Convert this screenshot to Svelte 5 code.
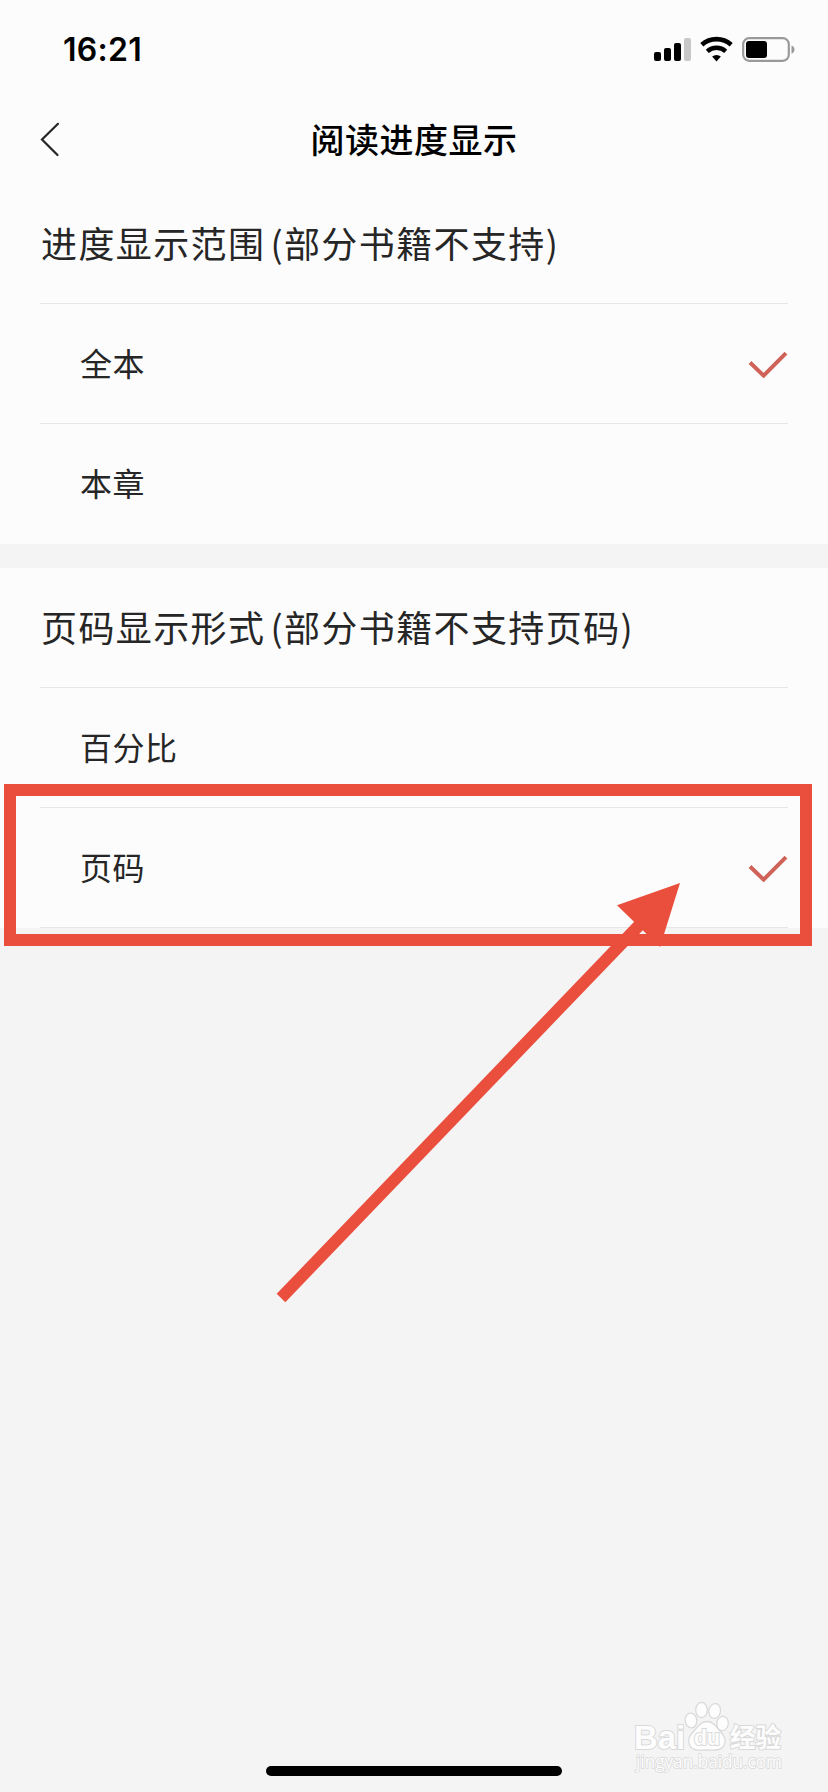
<script lang="ts">
  type Option = { id: string; label: string }
  type Section = { id: string; title: string; note: string; options: Option[] }

  const sections: Section[] = [
    {
      id: 'range',
      title: '进度显示范围',
      note: '(部分书籍不支持)',
      options: [
        { id: 'book', label: '全本' },
        { id: 'chapter', label: '本章' }
      ]
    },
    {
      id: 'format',
      title: '页码显示形式',
      note: '(部分书籍不支持页码)',
      options: [
        { id: 'percent', label: '百分比' },
        { id: 'page', label: '页码' }
      ]
    }
  ]

  let selected: Record<string, string> = $state({ range: 'book', format: 'page' })
</script>

<div class="screen">
  <div class="status-bar">
    <span class="time">16:21</span>
    <svg class="status-icons" width="144" height="28" viewBox="0 0 144 28">
      <rect x="1" y="16" width="7" height="9" rx="2" />
      <rect x="11" y="12" width="7" height="13" rx="2" />
      <rect x="21" y="7" width="7" height="18" rx="2" />
      <rect x="31" y="2" width="7" height="23" rx="2" fill="#c8c8c8" />
      <g fill="none" stroke="#000">
        <path d="M48.800 8.800a22 22 0 0 1 29.400 0" stroke-width="4.600" />
        <path d="M54.300 15.400a13.500 13.500 0 0 1 18.400 0" stroke-width="4.400" />
      </g>
      <path d="M59.100 20.600a6.800 6.800 0 0 1 8.800 0l-4.400 4.800z" />
      <rect x="90.200" y="2.200" width="45.600" height="22.600" rx="6" fill="none" stroke="#999" stroke-width="2.200" />
      <rect x="93" y="5" width="21" height="17" rx="3" />
      <path d="M138.500 9.500q3 1.200 3 4.100t-3 4.100z" fill="#999" />
    </svg>
  </div>

  <header class="nav">
    <button class="back" aria-label="返回">
      <svg width="20" height="36" viewBox="0 0 20 36">
        <path d="M18 1.800 2 17.500 17.500 33" fill="none" stroke="#262626" stroke-width="2.200" stroke-linecap="round" />
      </svg>
    </button>
    <h1>阅读进度显示</h1>
  </header>

  {#each sections as section (section.id)}
    <section class="group">
      <h2>{section.title}<span class="note">{section.note}</span></h2>
      {#each section.options as option (option.id)}
        <button class="option" onclick={() => (selected[section.id] = option.id)}>
          <span class="label">{option.label}</span>
          {#if selected[section.id] === option.id}
            <svg class="check" width="40" height="28" viewBox="0 0 40 28">
              <path d="M2 12.500 15.600 25.600 38 3.200" fill="none" stroke="#cf6259" stroke-width="4" />
            </svg>
          {/if}
        </button>
      {/each}
    </section>
  {/each}

  <!-- tutorial markup over the settings page -->
  <div class="highlight"></div>
  <svg class="arrow" width="828" height="1792" viewBox="0 0 828 1792">
    <path d="M281 1298 650 914" stroke="#ea4e3d" stroke-width="12" />
    <path d="M680 883 617 905.300 660 947z" fill="#ea4e3d" />
  </svg>

  <svg class="watermark" width="170" height="84" viewBox="0 0 170 84">
    <g fill="#fdfdfd" stroke="#d9d9d9" stroke-width="1.300">
      <ellipse cx="61" cy="28.500" rx="5.800" ry="7.400" transform="rotate(-8 61 28.500)" />
      <ellipse cx="71.500" cy="18" rx="5.800" ry="7.600" />
      <ellipse cx="84.700" cy="19" rx="5.800" ry="7.400" transform="rotate(10 84.700 19)" />
      <ellipse cx="92.500" cy="31.500" rx="5.800" ry="7.200" transform="rotate(8 92.500 31.500)" />
      <path d="M77 29.500c6 0 8.500 4.500 13 9.500 5.500 5.500 6.500 10 4 14.500-3.500 6-10.500 4.500-17 4.500s-13.500 1.500-17-4c-3-5-1.500-10 4-15 4.500-5 7-9.500 13-9.500z" />
      <text class="latin" x="4" y="56.500" textLength="51" lengthAdjust="spacingAndGlyphs">Bai</text>
      <text class="du" x="64" y="53" textLength="26" lengthAdjust="spacingAndGlyphs">du</text>
      <text class="han" x="100" y="54.500" textLength="51" lengthAdjust="spacingAndGlyphs">经验</text>
      <text class="url" x="6" y="75.500" textLength="146" lengthAdjust="spacingAndGlyphs">jingyan.baidu.com</text>
    </g>
  </svg>
  <div class="home-indicator"></div>
</div>

<style>
  :global(body) {
    margin: 0;
    background: #f4f4f4;
  }

  .screen {
    position: relative;
    width: 828px;
    height: 1792px;
    overflow: hidden;
    background: #f4f4f4;
    color: #262626;
    font-family: 'Noto Sans CJK SC', sans-serif;
  }

  .status-bar {
    display: flex;
    justify-content: space-between;
    align-items: center;
    box-sizing: border-box;
    height: 98px;
    padding: 1px 31px 0 63px;
    background: #fcfcfc;
    color: #000;
  }

  .time {
    font: 600 32px/40px Inter, sans-serif;
    letter-spacing: 0.3px;
  }

  .nav {
    display: grid;
    grid-template-columns: 120px 1fr 120px;
    align-items: center;
    height: 86px;
    background: #fcfcfc;
  }

  button {
    border: 0;
    background: none;
    color: inherit;
    font-family: inherit;
  }

  .back {
    display: flex;
    padding: 0 0 2px 40px;
  }

  h1 {
    margin: 0;
    padding-bottom: 4px;
    color: #000;
    font-size: 34px;
    font-weight: 500;
    line-height: 48px;
    letter-spacing: 0.5px;
    text-align: center;
  }

  .group {
    padding: 0 40px;
    background: #fcfcfc;
  }

  .group + .group {
    margin-top: 24px;
  }

  h2 {
    margin: 0;
    height: 119px;
    padding-left: 1px;
    font-size: 36px;
    font-weight: 400;
    line-height: 117px;
    letter-spacing: 1.4px;
    white-space: nowrap;
  }

  .note {
    margin-left: 5px;
  }

  .option {
    display: flex;
    justify-content: space-between;
    align-items: center;
    box-sizing: border-box;
    width: 100%;
    height: 120px;
    padding: 0 0 0 40px;
    border-top: 1px solid #e6e6e6;
    font-size: 32px;
    letter-spacing: 0.5px;
  }

  .label {
    padding-bottom: 4px;
  }

  .option:last-child {
    height: 121px;
    border-bottom: 1px solid transparent;
  }

  .group:nth-of-type(2) .option:last-child {
    border-bottom-color: #e6e6e6;
  }

  .highlight {
    position: absolute;
    left: 4px;
    top: 784px;
    box-sizing: border-box;
    width: 808px;
    height: 162px;
    border: 12px solid #ea4e3d;
    pointer-events: none;
  }

  .arrow {
    position: absolute;
    left: 0;
    top: 0;
    pointer-events: none;
  }

  .watermark {
    position: absolute;
    left: 630px;
    top: 1692px;
  }

  .watermark text {
    font-weight: 700;
    paint-order: stroke;
    stroke-width: 2px;
  }

  .latin {
    font-family: 'Liberation Sans', sans-serif;
    font-size: 33px;
  }

  .du {
    font-family: 'Liberation Sans', sans-serif;
    font-size: 22px;
  }

  .han {
    font-size: 26px;
  }

  .watermark .url {
    font-family: 'Open Sans', sans-serif;
    font-size: 18px;
    font-weight: 400;
    stroke-width: 1.6px;
  }

  .home-indicator {
    position: absolute;
    left: 266px;
    bottom: 16px;
    width: 296px;
    height: 10px;
    border-radius: 5px;
    background: #000;
  }
</style>
